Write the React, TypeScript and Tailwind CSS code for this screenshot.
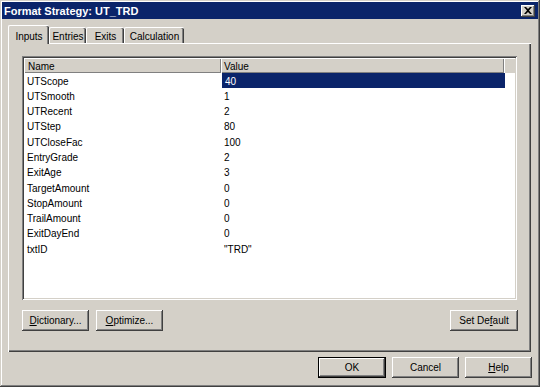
const ROWS: [string, string][] = [
  ['UTScope', '40'],
  ['UTSmooth', '1'],
  ['UTRecent', '2'],
  ['UTStep', '80'],
  ['UTCloseFac', '100'],
  ['EntryGrade', '2'],
  ['ExitAge', '3'],
  ['TargetAmount', '0'],
  ['StopAmount', '0'],
  ['TrailAmount', '0'],
  ['ExitDayEnd', '0'],
  ['txtID', '"TRD"'],
];

const raised =
  'shadow-[inset_-1px_-1px_#404040,inset_1px_1px_#ffffff,inset_-2px_-2px_#808080,inset_2px_2px_#d4d0c8]';

function Button({
  label,
  ul,
  width,
  isDefault,
}: {
  label: string;
  ul?: number;
  width: string;
  isDefault?: boolean;
}) {
  const text =
    ul === undefined ? (
      label
    ) : (
      <>
        {label.slice(0, ul)}
        <span className="underline">{label[ul]}</span>
        {label.slice(ul + 1)}
      </>
    );
  if (isDefault) {
    return (
      <div className={`${width} h-[21px] border border-black bg-[#d4d0c8]`}>
        <div className={`w-full h-full flex items-center justify-center ${raised}`}>{text}</div>
      </div>
    );
  }
  return (
    <div className={`${width} h-[21px] bg-[#d4d0c8] flex items-center justify-center ${raised}`}>
      {text}
    </div>
  );
}

function Tab({ label, width, active }: { label: string; width: string; active?: boolean }) {
  if (active) {
    return (
      <div
        className={`${width} h-[19px] -mb-px relative z-10 bg-[#d4d0c8] rounded-t-[2px] border-t border-l border-white shadow-[inset_-1px_0_#404040,inset_-2px_0_#808080] flex items-start justify-center pt-[3px]`}
      >
        {label}
      </div>
    );
  }
  return (
    <div
      className={`${width} h-[16px] rounded-t-[2px] border-t border-l border-white shadow-[inset_-1px_0_#404040,inset_-2px_0_#808080] flex items-center justify-center pt-px`}
    >
      {label}
    </div>
  );
}

export default function App() {
  return (
    <div className="w-[540px] h-[387px] bg-[#d4d0c8] p-[2px] flex flex-col overflow-hidden text-[10px] text-black font-['Liberation_Sans',Arial,sans-serif] shadow-[inset_-1px_-1px_#404040,inset_1px_1px_#d4d0c8,inset_-2px_-2px_#808080,inset_2px_2px_#ffffff]">
      {/* title bar */}
      <div className="h-[17px] bg-[#0a246a] flex items-center justify-between pl-[2px] pr-[3px]">
        <span className="text-white font-bold text-[11px] leading-none pt-px">Format Strategy: UT_TRD</span>
        <div className={`w-[14px] h-[12px] bg-[#d4d0c8] flex items-center justify-center ${raised}`}>
          <svg width="8" height="7" viewBox="0 0 8 7">
            <path d="M0 0h2l2 2 2-2h2L5 3.5 8 7H6L4 5 2 7H0l3-3.5z" fill="#000" />
          </svg>
        </div>
      </div>

      <div className="flex-1 flex flex-col pl-[6px] pt-[6px]">
        {/* tabs */}
        <div className="flex items-end h-[18px]">
          <Tab label="Inputs" width="w-[41px]" active />
          <Tab label="Entries" width="w-[37px]" />
          <Tab label="Exits" width="w-[38px]" />
          <Tab label="Calculation" width="w-[60px]" />
        </div>

        {/* tab panel */}
        <div className="w-[523px] h-[309px] flex flex-col pl-[14px] pt-[13px] shadow-[inset_1px_1px_#ffffff,inset_-1px_-1px_#404040,inset_-2px_-2px_#808080]">
          <div className="w-[495px] h-[244px] bg-white p-[2px] shadow-[inset_1px_1px_#808080,inset_-1px_-1px_#ffffff,inset_2px_2px_#404040,inset_-2px_-2px_#d4d0c8]">
            <div className="flex h-[15px] bg-[#d4d0c8]">
              <div className="w-[197px] pl-[4px] pt-px flex items-center shadow-[inset_1px_1px_#ffffff,inset_-1px_-1px_#808080]">
                Name
              </div>
              <div className="w-[283px] pl-[3px] pt-px flex items-center shadow-[inset_1px_1px_#ffffff,inset_-1px_-1px_#808080]">
                Value
              </div>
              <div className="flex-1 shadow-[inset_1px_1px_#ffffff]" />
            </div>
            {ROWS.map(([name, value], i) => (
              <div key={name} className="flex h-[15.27px] items-center">
                <div className="w-[197px] pl-[3px] pt-px">{name}</div>
                <div
                  className={`w-[283px] h-full pl-[3px] pt-px flex items-center ${
                    i === 0 ? 'bg-[#0a246a] text-white ml-px' : ''
                  }`}
                >
                  {value}
                </div>
              </div>
            ))}
          </div>

          <div className="w-[496px] flex items-center mt-[10px]">
            <Button label="Dictionary..." ul={0} width="w-[67px]" />
            <div className="w-[7px]" />
            <Button label="Optimize..." ul={0} width="w-[67px]" />
            <div className="flex-1" />
            <Button label="Set Default" ul={6} width="w-[68px]" />
          </div>
        </div>

        {/* dialog buttons */}
        <div className="flex justify-end gap-[6px] pr-[6px] mt-[5px]">
          <Button label="OK" width="w-[68px]" isDefault />
          <Button label="Cancel" width="w-[67px]" />
          <Button label="Help" ul={0} width="w-[67px]" />
        </div>
      </div>
    </div>
  );
}
